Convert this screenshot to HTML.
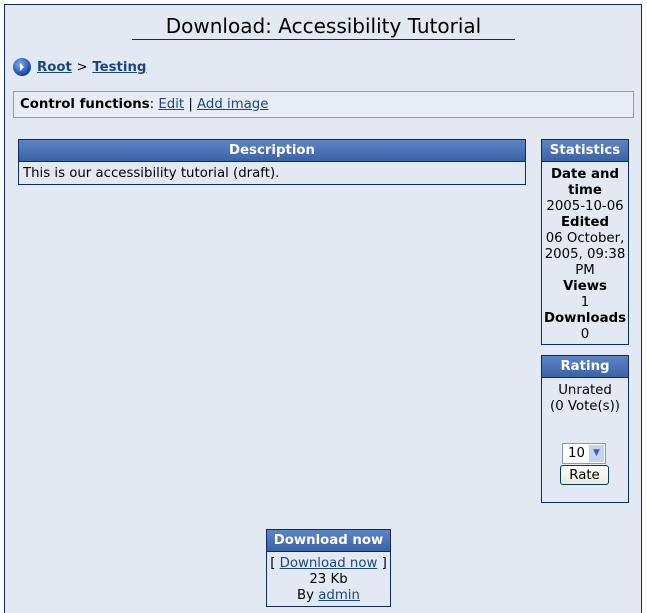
<!DOCTYPE html>
<html><head><style>
html,body{margin:0;width:647px;height:613px;overflow:hidden}
body{position:relative;background:#fff;font-family:Verdana,"DejaVu Sans",sans-serif;font-size:13.3px;color:#000}
.page{position:absolute;left:4px;top:4px;width:636px;height:608px;border:1px solid #0f2a66;border-bottom:none;background:#e3e9f2}
.a{position:absolute}
a{color:#1a4680;text-decoration:underline}
.box{position:absolute;border:1px solid #0f2a66;background:#e3e9f2;text-align:center;line-height:16px}
.hd{height:21px;line-height:22px;border-bottom:1px solid #0f2a66;background:linear-gradient(#5d85c6,#3c62a6);color:#fff;font-weight:bold;text-align:center}
</style></head><body>
<div class="page"></div>
<div class="a" style="left:0;width:647px;top:13px;text-align:center;font-size:20px;line-height:26px">Download: Accessibility Tutorial</div>
<div class="a" style="left:132px;top:39px;width:383px;height:1px;background:#0f2a66"></div>
<svg class="a" style="left:12px;top:57px" width="20" height="20"><defs><radialGradient id="g" cx="40%" cy="35%" r="65%"><stop offset="0" stop-color="#7fb0f0"/><stop offset="1" stop-color="#0f3f9a"/></radialGradient></defs><circle cx="10" cy="10" r="9" fill="url(#g)"/><path d="M8 6 L12 10 L8 14Z" fill="#fff"/></svg>
<div class="a" style="left:37px;top:59px;font-weight:bold;line-height:18px"><a href="#">Root</a> <span style="font-weight:normal">&gt;</span> <a href="#">Testing</a></div>
<div class="a" style="left:13px;top:91px;width:619px;height:25px;border:1px solid #8a9cc0;background:#e8edf5;line-height:26px"><span style="padding-left:6px"><b>Control functions</b>: <a href="#">Edit</a> | <a href="#">Add image</a></span></div>
<div class="box" style="left:18px;top:139px;width:506px;height:44px;text-align:left"><div class="hd">Description</div><div style="padding:4px 4px">This is our accessibility tutorial (draft).</div></div>
<div class="box" style="left:541px;top:139px;width:86px;height:204px"><div class="hd">Statistics</div><div style="padding-top:5px"><b>Date and time</b><br>2005-10-06<br><b>Edited</b><br>06 October, 2005, 09:38 PM<br><b>Views</b><br>1<br><b>Downloads</b><br>0</div></div>
<div class="box" style="left:541px;top:355px;width:86px;height:146px"><div class="hd">Rating</div><div style="padding-top:5px">Unrated<br>(0 Vote(s))</div>
<div class="a" style="left:20px;top:87px;width:42px;height:19px;border:1px solid #7f9db9;background:#fff;text-align:left;line-height:19px"><span style="padding-left:5px">10</span><span class="a" style="right:1px;top:1px;width:15px;height:17px;background:#c1d3fb;color:#4d6185;font-size:9px;line-height:17px;text-align:center">▼</span></div>
<div class="a" style="left:18px;top:109px;width:47px;height:18px;border:1px solid #003c74;border-radius:3px;background:linear-gradient(#fff,#ece9d8);line-height:19px">Rate</div></div>
<div class="box" style="left:266px;top:529px;width:123px;height:76px"><div class="hd">Download now</div><div style="padding-top:4px">[ <a href="#">Download now</a> ]<br>23 Kb<br>By <a href="#">admin</a></div></div>
</body></html>
